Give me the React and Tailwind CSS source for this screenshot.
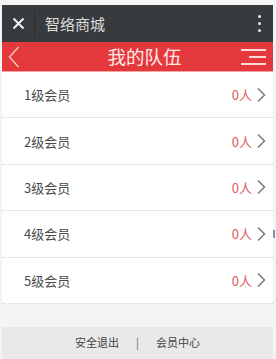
import React from "react";

const rows = ["1级会员", "2级会员", "3级会员", "4级会员", "5级会员"];

function Chevron() {
  return (
    <svg width="9" height="16" viewBox="0 0 9 16" fill="none">
      <path d="M1 1.5 L7.5 8 L1 14.5" stroke="#7a7a7a" strokeWidth="1.5" />
    </svg>
  );
}

export default function App() {
  return (
    <div
      className="w-[276px] h-[359px] bg-[#f4f4f4] pt-[5px] pl-[2px] pr-[3px] overflow-hidden flex flex-col"
      style={{ fontFamily: '"Noto Sans CJK SC", "Noto Sans", sans-serif' }}
    >
      {/* browser bar */}
      <div className="h-[37px] bg-[#383b3e] flex items-center shrink-0">
        <div className="w-[32px] flex justify-center">
          <svg width="13" height="13" viewBox="0 0 13 13">
            <path d="M1.5 1.5 L11.5 11.5 M11.5 1.5 L1.5 11.5" stroke="#f2f2f2" strokeWidth="2" />
          </svg>
        </div>
        <div className="w-px h-[26px] bg-[#2c2f31]" />
        <div className="ml-[10px] text-[15px] text-[#dcdcdc] leading-none">智络商城</div>
        <div className="ml-auto mr-[12px] flex flex-col gap-[4px]">
          <div className="w-[3px] h-[3px] bg-[#e8e8e8] rounded-full" />
          <div className="w-[3px] h-[3px] bg-[#e8e8e8] rounded-full" />
          <div className="w-[3px] h-[3px] bg-[#e8e8e8] rounded-full" />
        </div>
      </div>
      {/* red header */}
      <div className="h-[29px] bg-[#e4393c] flex items-center shrink-0">
        <div className="pl-[6px]">
          <svg width="12" height="22" viewBox="0 0 12 22" fill="none">
            <path d="M10.5 1 L1.5 11 L10.5 21" stroke="#f6c6c6" strokeWidth="1.4" />
          </svg>
        </div>
        <div className="flex-1 text-center pl-[28px] text-[18.5px] text-[#fde8e8] leading-none">我的队伍</div>
        <div className="pr-[7px] flex flex-col items-end gap-[5px]">
          <div className="w-[25px] h-[2px] bg-[#fbd9d9]" />
          <div className="w-[17px] h-[2px] bg-[#fbd9d9]" />
          <div className="w-[25px] h-[2px] bg-[#fbd9d9]" />
        </div>
      </div>
      <div className="h-px bg-[#f3a5a5] shrink-0" />
      {/* list */}
      <div className="bg-white shrink-0">
        {rows.map((r, i) => (
          <div
            key={r}
            className="h-[46.4px] flex items-center border-b border-dotted border-[#d0d0d0] relative"
          >
            <div className="pl-[22px] text-[13px] text-[#4a4a4a] leading-none">{r}</div>
            <div className="ml-auto flex items-center pr-[7px]">
              <span className="text-[13px] text-[#e05a5a] leading-none">0人</span>
              <span className="ml-[5px] flex"><Chevron /></span>
            </div>
            {i === 3 && (
              <div className="absolute right-[-2px] top-[19px] w-[2px] h-[8px] bg-[#8a8fa0]" />
            )}
          </div>
        ))}
      </div>
      <div className="h-[23px] bg-[#f4f4f4] shrink-0" />
      {/* footer */}
      <div className="flex-1 bg-[#e9e9e9] flex items-center justify-center text-[11px] text-[#444] leading-none">
        <span>安全退出</span>
        <span className="mx-[17px] text-[#666]">|</span>
        <span>会员中心</span>
      </div>
    </div>
  );
}
